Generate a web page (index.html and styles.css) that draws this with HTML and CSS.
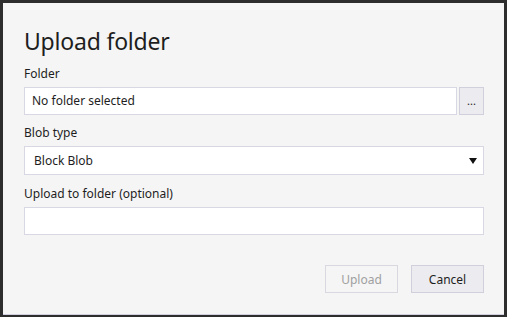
FILE: index.html
```html
<!DOCTYPE html>
<html>
<head>
<meta charset="utf-8">
<link rel="stylesheet" href="styles.css">
</head>
<body>
<div class="dialog">
  <h1 class="title">Upload folder</h1>
  <div class="field">
    <label class="label">Folder</label>
    <div class="row">
      <div class="input">No folder selected</div>
      <button class="browse">...</button>
    </div>
  </div>
  <div class="field second">
    <label class="label">Blob type</label>
    <div class="select">
      <span>Block Blob</span>
      <span class="arrow"></span>
    </div>
  </div>
  <div class="field third">
    <label class="label">Upload to folder (optional)</label>
    <div class="input"></div>
  </div>
  <div class="actions">
    <button class="btn disabled">Upload</button>
    <button class="btn">Cancel</button>
  </div>
</div>
</body>
</html>
```

FILE: styles.css
```css
html, body {
  margin: 0;
  padding: 0;
  background: #2d2d2d;
  width: 507px;
  height: 317px;
  overflow: hidden;
}
body {
  padding: 3px 3px 0 3px;
  box-sizing: border-box;
  font-family: "Noto Sans", "Open Sans", sans-serif;
  color: #1e1e1e;
}
.dialog {
  width: 501px;
  height: 312px;
  box-sizing: border-box;
  background: #f5f5f5;
  border-bottom: 1px solid #cfcfe0;
  padding: 0 20px 0 21px;
  display: flex;
  flex-direction: column;
}
.title {
  margin: 22px 0 0 0;
  font-weight: 400;
  font-size: 23px;
  line-height: 32px;
  height: 32px;
  letter-spacing: -0.2px;
}
.field {
  display: flex;
  flex-direction: column;
}
.label {
  font-size: 12px;
  line-height: 16px;
  height: 16px;
  margin-top: 9px;
  margin-bottom: 5px;
}
.second .label {
  margin-top: 10px;
}
.third .label {
  margin-top: 11px;
}
.row {
  display: flex;
  gap: 2px;
}
.input, .select {
  height: 28px;
  box-sizing: border-box;
  background: #ffffff;
  border: 1px solid #d8d8e4;
  font-size: 12px;
  line-height: 26px;
  padding: 0 7px;
}
.row .input {
  flex: 1;
}
.browse {
  width: 25px;
  height: 28px;
  box-sizing: border-box;
  background: #ebebf0;
  border: 1px solid #d0d0dc;
  padding: 0;
  font-size: 11px;
  font-family: inherit;
  color: #1e1e1e;
  line-height: 14px;
}
.select {
  display: flex;
  justify-content: space-between;
  align-items: center;
  padding-left: 9px;
  padding-right: 6px;
  height: 29px;
}
.arrow {
  width: 0;
  height: 0;
  border-left: 4px solid transparent;
  border-right: 4px solid transparent;
  border-top: 6px solid #111;
}
.actions {
  display: flex;
  justify-content: flex-end;
  gap: 13px;
  margin-top: 30px;
}
.btn {
  width: 73px;
  height: 28px;
  box-sizing: border-box;
  background: #ebebf0;
  border: 1px solid #d0d0dc;
  font-family: inherit;
  font-size: 12px;
  color: #1e1e1e;
  padding: 0;
}
.btn.disabled {
  background: #f5f5f5;
  border-color: #d8d8e0;
  color: #a0a0a0;
}
```
